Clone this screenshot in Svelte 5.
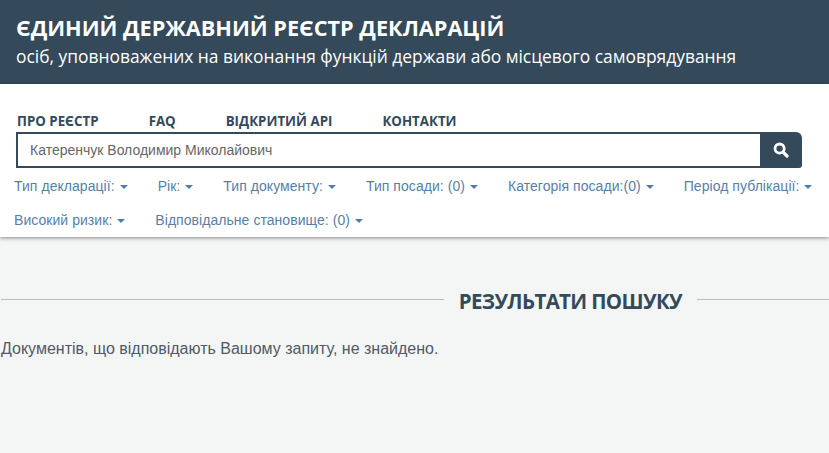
<script>
  const menu = ['ПРО РЕЄСТР', 'FAQ', 'ВІДКРИТИЙ API', 'КОНТАКТИ']

  const filters = [
    'Тип декларації:',
    'Рік:',
    'Тип документу:',
    'Тип посади: (0)',
    'Категорія посади:(0)',
    'Період публікації:',
    'Високий ризик:',
    'Відповідальне становище: (0)'
  ]

  let query = 'Катеренчук Володимир Миколайович'
</script>

<header class="banner">
  <h1>ЄДИНИЙ ДЕРЖАВНИЙ РЕЄСТР ДЕКЛАРАЦІЙ</h1>
  <p>осіб, уповноважених на виконання функцій держави або місцевого самоврядування</p>
</header>

<section class="top">
  <nav class="menu">
    {#each menu as item}
      <a href="#top">{item}</a>
    {/each}
  </nav>

  <form class="search" on:submit|preventDefault>
    <input type="text" bind:value={query} />
    <button type="submit" aria-label="Пошук">
      <svg viewBox="0 0 16 16" width="16" height="16">
        <circle cx="6.6" cy="6.6" r="4.6" fill="none" stroke="#fff" stroke-width="2.8" />
        <path d="M10.4 10.4 L14 14" stroke="#fff" stroke-width="3.2" stroke-linecap="round" />
      </svg>
    </button>
  </form>

  <div class="filters">
    {#each filters as label}
      <button type="button" class="filter">{label}<span class="caret"></span></button>
    {/each}
  </div>
</section>

<main class="results">
  <div class="heading">
    <span class="rule"></span>
    <h2>РЕЗУЛЬТАТИ ПОШУКУ</h2>
    <span class="rule short"></span>
  </div>
  <p class="empty">Документів, що відповідають Вашому запиту, не знайдено.</p>
</main>

<style>
  :global(body) {
    margin: 0;
    background: #f4f6f6;
    font-family: 'Liberation Sans', Arial, sans-serif;
    overflow: hidden;
  }

  .banner {
    background: #34495a;
    color: #fff;
    height: 84px;
    box-sizing: border-box;
    padding: 13px 16px 0;
    font-family: 'Open Sans', sans-serif;
  }

  .banner h1 {
    margin: 0;
    font-size: 21.7px;
    line-height: 30px;
    font-weight: 700;
  }

  .banner p {
    margin: 0;
    font-size: 17.4px;
    line-height: 26px;
  }

  .top {
    background: #fff;
    height: 153px;
    box-sizing: border-box;
    padding-top: 27px;
    box-shadow: 0 1px 4px rgba(0, 0, 0, 0.45);
    position: relative;
  }

  .menu {
    display: flex;
    gap: 50px;
    padding-left: 17px;
    height: 21px;
  }

  .menu a {
    font-family: 'Open Sans', sans-serif;
    font-size: 13.3px;
    line-height: 20px;
    font-weight: 700;
    color: #34495a;
    text-decoration: none;
  }

  .search {
    display: flex;
    margin: 0 27px 0 16px;
    height: 36px;
  }

  .search input {
    flex: 1;
    min-width: 0;
    box-sizing: border-box;
    border: 2px solid #34495a;
    border-right: 0;
    padding: 0 12px;
    font-family: inherit;
    font-size: 14px;
    color: #666;
    outline: none;
  }

  .search button {
    width: 42px;
    border: 0;
    padding: 0;
    background: #34495a;
    border-radius: 0 6px 3px 0;
    display: flex;
    align-items: center;
    justify-content: center;
  }

  .filters {
    display: flex;
    flex-wrap: wrap;
    column-gap: 30px;
    padding: 1px 0 0 14px;
  }

  .filter {
    border: 0;
    background: none;
    padding: 0;
    height: 34px;
    font-family: inherit;
    font-size: 14px;
    letter-spacing: 0.05px;
    color: #567fa8;
    white-space: nowrap;
  }

  .caret {
    display: inline-block;
    margin-left: 5px;
    vertical-align: middle;
    border-top: 4px solid #4f7ca8;
    border-left: 4px solid transparent;
    border-right: 4px solid transparent;
  }

  .results {
    padding-top: 45px;
  }

  .heading {
    display: flex;
    align-items: center;
    gap: 15px;
    padding-left: 1px;
  }

  .rule {
    flex: 1;
    height: 1px;
    background: #bbb;
  }

  .rule.short {
    flex: 0 0 132px;
  }

  .heading h2 {
    margin: 0;
    padding-top: 4px;
    font-family: 'Open Sans', sans-serif;
    font-size: 20.5px;
    line-height: 30px;
    font-weight: 700;
    letter-spacing: -0.65px;
    color: #34495a;
  }

  .empty {
    margin: 22px 0 0 1px;
    font-size: 16px;
    line-height: 22px;
    color: #4f5a66;
  }
</style>
